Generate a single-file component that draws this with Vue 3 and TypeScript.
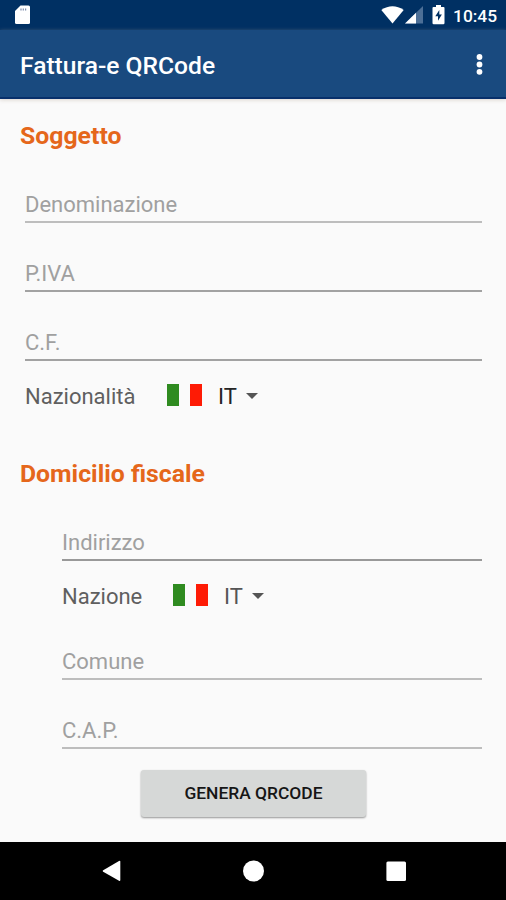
<script setup lang="ts">
import { reactive } from 'vue'

interface Field {
  key: string
  hint: string
  tone: string
}

const values = reactive<Record<string, string>>({
  denominazione: '', piva: '', cf: '', indirizzo: '', comune: '', cap: '',
})

const subjectFields: Field[] = [
  { key: 'denominazione', hint: 'Denominazione', tone: 'soft' },
  { key: 'piva', hint: 'P.IVA', tone: 'mid' },
  { key: 'cf', hint: 'C.F.', tone: 'mid' },
]
const addressFields: Field[] = [
  { key: 'comune', hint: 'Comune', tone: 'soft' },
  { key: 'cap', hint: 'C.A.P.', tone: 'soft' },
]
</script>

<template>
  <div class="screen">
    <div class="status">
      <svg class="sd" width="17" height="20" viewBox="0 0 17 20">
        <path d="M6.5 0.5H14.5Q16 .5 16 2V17.5Q16 19 14.5 19H2.500Q1 19 1 17.500V6Z" fill="#fff" />
        <path d="M7 3.500v2M9.300 3.500v2M11.600 3.500v2" stroke="#7d8dab" stroke-width="1.200" />
      </svg>
      <svg class="wifi" width="23" height="18" viewBox="0 0 23 18">
        <path d="M0.300 4Q11.500-3.500 22.700 4L11.500 17.500Z" fill="#fff" />
      </svg>
      <svg class="signal" width="18" height="18" viewBox="0 0 18 18">
        <path d="M18 0V17.500H0Z" fill="#4c6f97" />
        <path d="M11 6.800V17.500H0Z" fill="#fff" />
      </svg>
      <svg class="battery" width="13" height="20" viewBox="0 0 13 20">
        <path d="M4 0H9V2H11.500Q12.500 2 12.500 3V18Q12.500 19.300 11.300 19.300H1.700Q.5 19.300 .5 18V3Q.5 2 1.500 2H4Z" fill="#fff" />
        <path d="M7.300 5L3.300 11.200H6V15.800L9.900 9.600H7.300Z" fill="#003063" />
      </svg>
      <span class="clock">10:45</span>
    </div>

    <header class="appbar">
      <h1 class="title">Fattura-e QRCode</h1>
      <button class="more" aria-label="Menu">
        <svg width="8" height="24" viewBox="0 0 8 24" fill="#fff">
          <circle cx="4.500" cy="5" r="2.900" />
          <circle cx="4.500" cy="12.500" r="2.900" />
          <circle cx="4.500" cy="19.800" r="2.900" />
        </svg>
      </button>
    </header>

    <main class="content">
      <h2 class="heading subject">Soggetto</h2>
      <section class="group">
        <label v-for="f in subjectFields" :key="f.key" class="field" :class="[f.tone, f.key]">
          <span v-if="!values[f.key]" class="hint">{{ f.hint }}</span>
          <input v-model="values[f.key]" type="text" />
        </label>
        <div class="country">
          <span class="country-label nationality">Nazionalità</span>
          <span class="flag"><i class="green"></i><i class="red"></i></span>
          <span class="code">IT</span>
          <svg class="caret" width="12" height="6" viewBox="0 0 12 6"><path d="M0 0H12L6 6Z" fill="#555" /></svg>
        </div>
      </section>

      <h2 class="heading domicile">Domicilio fiscale</h2>
      <section class="group inner">
        <label class="field dark indirizzo">
          <span v-if="!values.indirizzo" class="hint">Indirizzo</span>
          <input v-model="values.indirizzo" type="text" />
        </label>
        <div class="country second">
          <span class="country-label nation">Nazione</span>
          <span class="flag"><i class="green"></i><i class="red"></i></span>
          <span class="code muted">IT</span>
          <svg class="caret" width="12" height="6" viewBox="0 0 12 6"><path d="M0 0H12L6 6Z" fill="#555" /></svg>
        </div>
        <label v-for="f in addressFields" :key="f.key" class="field" :class="[f.tone, f.key]">
          <span v-if="!values[f.key]" class="hint">{{ f.hint }}</span>
          <input v-model="values[f.key]" type="text" />
        </label>
      </section>
      <button class="generate">GENERA QRCODE</button>
    </main>

    <nav class="navbar">
      <svg width="19" height="22" viewBox="0 0 19 22"><path d="M1.200 10.200L17 .9Q18.300.3 18.300 1.600V20Q18.300 21.400 17 20.700L1.200 11.800Q0 11 1.200 10.200Z" fill="#fff" /></svg>
      <svg width="22" height="22" viewBox="0 0 22 22"><circle cx="10.500" cy="11" r="10.500" fill="#fff" /></svg>
      <svg width="20" height="20" viewBox="0 0 20 20"><rect x=".4" y=".5" width="19.600" height="19.400" rx="1.500" fill="#fff" /></svg>
    </nav>
  </div>
</template>

<style>
body { background: #fafafa; }
</style>

<style scoped>
* { box-sizing: border-box; }
.screen {
  width: 506px; height: 900px; display: flex; flex-direction: column;
  font-family: Roboto, "Liberation Sans", sans-serif; background: #fafafa; overflow: hidden;
}
h1, h2 { margin: 0; font-weight: 500; white-space: nowrap; }
button { border: 0; padding: 0; font-family: inherit; }
svg { display: block; flex: none; }
.status { height: 30px; flex: none; background: #003063; display: flex; padding: 0 9px 0 14px; color: #fff; }
.sd { margin-top: 5px; }
.wifi { margin: 6px 0 0 350px; }
.signal { margin: 6px 0 0 1px; }
.battery { margin: 5px 0 0 9px; }
.clock { margin-left: 8px; font-size: 17.400px; font-weight: 500; line-height: 32px; white-space: nowrap; }
.appbar {
  height: 69px; flex: none; background: #194a7f; border-bottom: 2px solid #08306b;
  display: flex; align-items: center; justify-content: space-between; padding: 5px 23px 0 20px;
  box-shadow: 0 1px 4px #b9aa9c77;
}
.title { color: #fff; font-size: 24.600px; line-height: 34px; }
.more { background: none; margin-top: -4px; }
.content { flex: 1; display: flex; flex-direction: column; padding: 22px 24px 0 20px; }
.heading { color: #e5671b; font-size: 24.800px; font-weight: 700; line-height: 30px; height: 30px; }
.group { padding-left: 5px; padding-top: 3px; display: flex; flex-direction: column; }
.inner { padding-left: 42px; }
.field { height: 69px; display: grid; border-bottom: 2px solid #b0b0b0; }
.field.mid { border-color: #a2a2a2; }
.field.dark { border-color: #999; }
.field.soft { border-color: #bdbdbd; }
.hint, .field input { grid-area: 1 / 1; }
.hint { align-self: end; color: #a0a0a0; font-size: 22px; line-height: 30px; padding-bottom: 1px; white-space: nowrap; }
.field input { border: 0; background: transparent; outline: 0; padding: 33px 0 0; font: 22px Roboto, sans-serif; min-width: 0; width: 100%; }
.country { height: 70px; display: flex; align-items: center; color: #5f5f5f; font-size: 22px; white-space: nowrap; }
.country.second { margin-bottom: -20px; }
.country-label { width: 142px; }
.country-label.nation { width: 111px; }
.flag { width: 35px; height: 22px; margin-top: -2px; display: flex; justify-content: space-between; }
.flag i { width: 12px; height: 22px; }
.green { background: #2f8b20; }
.red { background: #fe1b05; }
.code { margin-left: 16px; width: 28px; color: #242424; }
.code.muted { color: #555; }
.domicile { margin-top: 28px; }
.generate {
  align-self: flex-start; margin: 21px 0 0 121px; width: 225px; height: 47px; border-radius: 3px; padding-bottom: 2px;
  background: #d6d8d7; color: #161616; font-size: 17.400px; font-weight: 500; box-shadow: 0 1px 2px #0006;
}
.navbar { height: 58px; flex: none; background: #000; display: flex; align-items: center; justify-content: space-between; padding: 0 100px 0 102px; }
.inner .hint { padding-bottom: 1.500px; }
</style>
